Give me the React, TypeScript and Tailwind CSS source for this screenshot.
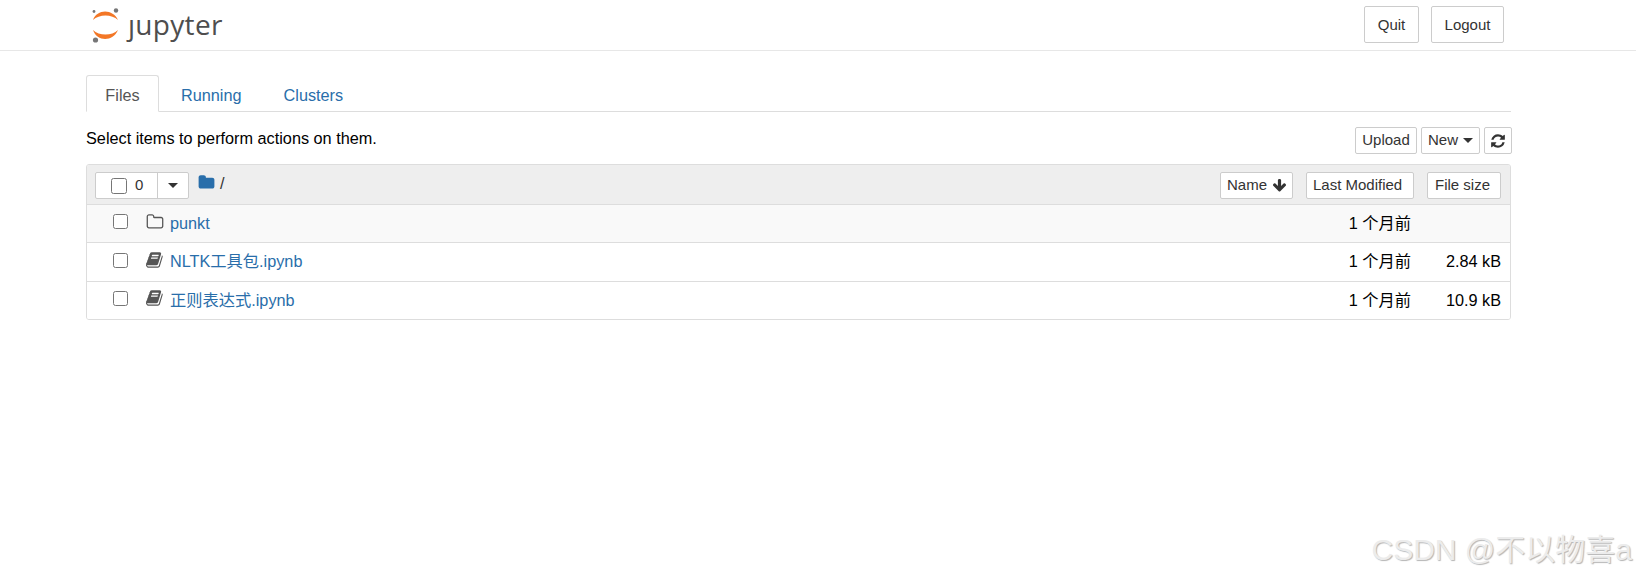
const FOLDER = 'M1728 608v704q0 92-66 158t-158 66h-1216q-92 0-158-66t-66-158v-960q0-92 66-158t158-66h320q92 0 158 66t66 158v32h672q92 0 158 66t66 158z';
const FOLDER_O = 'M1600 1312v-704q0-40-28-68t-68-28h-704q-40 0-68-28t-28-68v-64q0-40-28-68t-68-28h-320q-40 0-68 28t-28 68v960q0 40 28 68t68 28h1216q40 0 68-28t28-68zm128-704v704q0 92-66 158t-158 66h-1216q-92 0-158-66t-66-158v-960q0-92 66-158t158-66h320q92 0 158 66t66 158v32h672q92 0 158 66t66 158z';
const BOOK = 'M1639 478q40 57 18 129l-275 906q-19 64-76.500 107.500t-122.500 43.500h-923q-77 0-148.500-53.500t-99.500-131.500q-24-67-2-127 0-4 3-27t4-37q1-8-3-21.500t-3-19.500q2-11 8-21t16.500-23.500 16.500-23.500q23-38 45-91.500t30-91.500q3-10 .5-30t-.5-28q3-11 17-28t17-23q21-36 42-92t25-90q1-9-2.500-32t.5-28q4-13 22-30.500t22-22.500q19-26 42.500-84.500t27.500-96.500q1-8-3-25.500t-2-26.500q2-8 9-18t18-23 17-21q8-12 16.500-30.500t15-35 16-36 19.500-32 26.500-23.500 36-11.500 47.500 5.500l-1 3q38-9 51-9h761q74 0 114 56t18 130l-274 906q-36 119-71.500 153.500t-128.500 34.500h-869q-27 0-38 15-11 16-1 43 24 70 144 70h923q29 0 56-15.500t35-41.500l300-987q7-22 5-57 38 15 59 43zm-1064 2q-4 13 2 22.500t20 9.500h608q13 0 25.500-9.500t16.500-22.500l21-64q4-13-2-22.500t-20-9.500h-608q-13 0-25.500 9.500t-16.500 22.500zm-83 256q-4 13 2 22.500t20 9.500h608q13 0 25.500-9.500t16.500-22.500l21-64q4-13-2-22.500t-20-9.500h-608q-13 0-25.500 9.500t-16.500 22.500z';
const REFRESH = 'M1639 1056q0 5-1 7-64 268-268 434.500t-478 166.500q-146 0-282.500-55t-243.500-157l-129 129q-19 19-45 19t-45-19-19-45v-448q0-26 19-45t45-19h448q26 0 45 19t19 45-19 45l-137 137q71 66 161 102t187 36q134 0 250-65t186-179q11-17 53-117 8-23 30-23h192q13 0 22.500 9.500t9.500 22.500zm25-800v448q0 26-19 45t-45 19h-448q-26 0-45-19t-19-45 19-45l138-138q-148-137-349-137-134 0-250 65t-186 179q-11 17-53 117-8 23-30 23h-199q-13 0-22.500-9.500t-9.500-22.500v-7q65-268 270-434.500t480-166.500q146 0 284 55.500t245 156.500l130-129q19-19 45-19t45 19 19 45z';
const ARROW_DOWN = 'M1675 832q0 53-37 90l-651 652q-39 37-91 37-53 0-90-37l-651-652q-38-36-38-90 0-53 38-91l74-75q39-37 91-37 53 0 90 37l294 294v-704q0-52 38-90t90-38h128q52 0 90 38t38 90v704l294-294q37-37 90-37 52 0 91 37l75 75q37 39 37 91z';

function FaIcon({ d, className }: { d: string; className: string }) {
  return (
    <svg viewBox="0 0 1792 1792" fill="currentColor" className={className}>
      <path d={d} />
    </svg>
  );
}

function Caret({ className = '' }: { className?: string }) {
  return <span className={`inline-block w-0 h-0 border-x-[5px] border-x-transparent border-t-[5px] border-t-[#333] ${className}`} />;
}

function JupyterLogo() {
  return (
    <svg viewBox="0 0 28 36" className="w-[28px] h-[36px] shrink-0">
      <path d="M2 13 C 6 1.500, 22 1.500, 27 13 C 21 7, 8 7, 2 13 Z" fill="#f37726" />
      <path d="M2 23 C 6 35, 22 35, 27 23 C 21 29, 8 29, 2 23 Z" fill="#f37726" />
      <circle cx="25" cy="3.500" r="2.200" fill="#767677" />
      <circle cx="3" cy="4.500" r="1.400" fill="#767677" />
      <circle cx="4.500" cy="33" r="2.600" fill="#767677" />
    </svg>
  );
}

const files = [
  { name: 'punkt', icon: 'folder', modified: '1 个月前', size: '', row: 'h-[37px] bg-[#f9f9f9]' },
  { name: 'NLTK工具包.ipynb', icon: 'book', modified: '1 个月前', size: '2.84 kB', row: 'h-[39px] bg-white border-t border-[#ddd]' },
  { name: '正则表达式.ipynb', icon: 'book', modified: '1 个月前', size: '10.9 kB', row: 'h-[38px] bg-white border-t border-[#ddd]' },
];

const SMALL_BTN = 'h-[27px] flex items-center bg-white border border-[#ccc] rounded-[2px] text-[15px] text-[#333]';

export default function App() {
  return (
    <div className="relative min-h-[577px] overflow-hidden bg-white text-[16.25px] text-black font-['Liberation_Sans','Noto_Sans_CJK_SC',sans-serif]">
      {/* Header */}
      <div className="h-[51px] border-b border-[#e7e7e7] flex items-start justify-between pl-[91px] pr-[132px]">
        <div className="flex items-center gap-[9px] pt-[7px]">
          <JupyterLogo />
          <span className="-mt-[3px] text-[28px] leading-[34px] tracking-[0.3px] text-[#4e4e4e] font-['Open_Sans',sans-serif]">ȷupyter</span>
        </div>
        <div className="flex gap-[12px] pt-[6px]">
          <button className="w-[55px] h-[37px] pt-[2px] bg-white border border-[#ccc] rounded-[2px] text-[15px] text-[#333]">Quit</button>
          <button className="w-[73px] h-[37px] pt-[2px] bg-white border border-[#ccc] rounded-[2px] text-[15px] text-[#333]">Logout</button>
        </div>
      </div>

      <div className="ml-[86px] w-[1425px]">
        {/* Tabs */}
        <div className="mt-[24px] h-[37px] flex border-b border-[#ddd]">
          <div className="w-[73px] h-[37px] pt-[3px] flex items-center justify-center bg-white border border-[#ddd] border-b-white rounded-t-[3px] text-[#555]">Files</div>
          <div className="ml-[22px] h-[36px] pt-[4px] flex items-center text-[#296eaa]">Running</div>
          <div className="ml-[42px] h-[36px] pt-[4px] flex items-center text-[#296eaa]">Clusters</div>
        </div>

        {/* Toolbar */}
        <div className="mt-[15px] h-[27px] flex items-center justify-between">
          <span className="-mt-[4px]">Select items to perform actions on them.</span>
          <div className="flex gap-[4px] -mr-[1px]">
            <button className={`${SMALL_BTN} w-[62px] justify-center`}>Upload</button>
            <button className={`${SMALL_BTN} w-[59px] justify-center gap-[5px]`}>New <Caret /></button>
            <button className={`${SMALL_BTN} w-[28px] justify-center`}>
              <FaIcon d={REFRESH} className="w-[16px] h-[16px] text-[#333]" />
            </button>
          </div>
        </div>

        {/* File list */}
        <div className="mt-[10px] border border-[#ddd] rounded-[3px] overflow-hidden">
          <div className="h-[40px] bg-[#eee] border-b border-[#ddd] flex items-start pt-[7px] pl-[8px] pr-[9px]">
            <div className="w-[94px] h-[27px] flex bg-white border border-[#ccc] rounded-[2px] text-[15px] text-[#333]">
              <div className="w-[62px] flex items-center pl-[15px] gap-[8px] border-r border-[#ccc]">
                <input type="checkbox" readOnly className="w-[16px] h-[16px] m-0" />
                <span>0</span>
              </div>
              <div className="flex-1 flex items-center justify-center"><Caret className="border-x-[5.5px] border-t-[5.5px]" /></div>
            </div>
            <FaIcon d={FOLDER} className="ml-[9px] mt-[2px] w-[17px] h-[17px] text-[#296eaa]" />
            <span className="ml-[5px] -mt-[1px] text-[#333]">/</span>
            <button className={`${SMALL_BTN} ml-auto w-[73px] pl-[6px] gap-[5px]`}>
              Name <FaIcon d={ARROW_DOWN} className="w-[15px] h-[15px] text-[#333]" />
            </button>
            <button className={`${SMALL_BTN} ml-[13px] w-[108px] pl-[6px]`}>Last Modified</button>
            <button className={`${SMALL_BTN} ml-[13px] w-[74px] pl-[7px]`}>File size</button>
          </div>

          {files.map(f => (
            <div key={f.name} className={`flex items-center ${f.row}`}>
              <input type="checkbox" readOnly className="ml-[26px] -mt-[4px] w-[15px] h-[15px]" />
              {f.icon === 'folder' ? (
                <FaIcon d={FOLDER_O} className="ml-[18px] -mt-[3px] w-[18px] h-[18px] text-[#555]" />
              ) : (
                <FaIcon d={BOOK} className="ml-[18px] -mt-[5px] w-[18px] h-[18px] text-[#555]" />
              )}
              <span className="ml-[6px] -mt-[1px] text-[#296eaa]">{f.name}</span>
              <span className="ml-auto -mt-[1px] w-[120px] text-right">{f.modified}</span>
              <span className="-mt-[1px] w-[99px] pr-[9px] text-right">{f.size}</span>
            </div>
          ))}
        </div>
      </div>

      {/* CSDN watermark */}
      <div className="absolute right-[4px] bottom-[10px] text-[30px] leading-[34px] text-[#ececec] [text-shadow:1px_1px_1px_#b5b5b5]">
        CSDN @不以物喜a
      </div>
    </div>
  );
}
